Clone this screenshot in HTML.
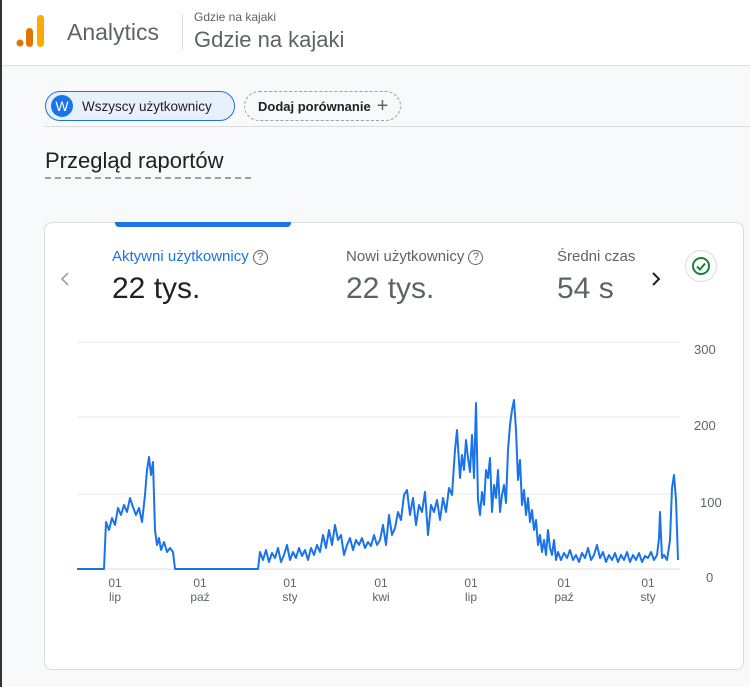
<!DOCTYPE html>
<html><head><meta charset="utf-8"><style>
*{box-sizing:border-box;margin:0;padding:0}
body{width:750px;height:687px;overflow:hidden;background:#f8f9fa;font-family:"Liberation Sans",Arial,sans-serif;position:relative}
.hdr{position:absolute;left:0;top:0;width:750px;height:66px;background:#fff;border-bottom:1px solid #dadce0}
.t{position:absolute;white-space:nowrap}
.chip{position:absolute;height:30px;border-radius:15px;font-size:14px;display:flex;align-items:center}
.card{position:absolute;left:44px;top:222px;width:700px;height:448px;background:#fff;border:1px solid #dadce0;border-radius:8px}
.q{display:inline-block;width:15px;height:15px;border:1.5px solid #5f6368;border-radius:50%;font-size:11px;text-align:center;line-height:13px;color:#5f6368;margin-left:4px;vertical-align:1px}
</style></head><body>
<div class="hdr">
  <svg style="position:absolute;left:16px;top:14px" width="32" height="34"><circle cx="4" cy="29" r="3.5" fill="#e37400"/><rect x="10" y="14" width="7" height="19" rx="3.5" fill="#e37400"/><rect x="21" y="1" width="7" height="32" rx="3.5" fill="#f9ab00"/></svg>
  <div class="t" style="left:67px;top:19px;font-size:23px;color:#5f6368">Analytics</div>
  <div style="position:absolute;left:182px;top:14px;width:1px;height:36px;background:#dadce0"></div>
  <div class="t" style="left:194px;top:10px;font-size:12px;color:#5f6368">Gdzie na kajaki</div>
  <div class="t" style="left:194px;top:27px;font-size:22px;color:#5f6368">Gdzie na kajaki</div>
</div>
<div style="position:absolute;left:0;top:0;width:2px;height:687px;background:#333"></div>
<div class="chip" style="left:45px;top:91px;width:190px;background:#e8f0fe;border:1px solid #1a73e8">
  <span style="width:22px;height:22px;border-radius:50%;background:#1a73e8;color:#fff;font-size:14px;display:flex;align-items:center;justify-content:center;margin-left:5px">W</span>
  <span style="margin-left:9px;color:#202124;font-size:13.5px">Wszyscy użytkownicy</span></div>
<div class="chip" style="left:244px;top:91px;width:157px;border:1px dashed #9aa0a6;font-weight:bold;color:#202124;font-size:13px">
  <span style="margin-left:13px">Dodaj porównanie</span><span style="margin-left:6px;font-weight:normal;font-size:20px;color:#5f6368">+</span></div>
<div style="position:absolute;left:44px;top:126px;width:706px;height:1px;background:#dadce0"></div>
<div class="t" style="left:45px;top:148px;font-size:22px;color:#202124">Przegląd raportów</div>
<div style="position:absolute;left:45px;top:177px;width:206px;border-top:2px dashed #9aa0a6"></div>
<div class="card">
  <div style="position:absolute;left:70px;top:-1px;width:176px;height:5px;background:#1a73e8;border-radius:0 0 4px 4px"></div>
  <svg style="position:absolute;left:14px;top:48px" width="12" height="16"><path d="M9 2L3 8l6 6" fill="none" stroke="#9aa0a6" stroke-width="1.6"/></svg>
  <div class="t" style="left:67px;top:25px;font-size:15px;color:#1a73e8">Aktywni użytkownicy<span class="q">?</span></div>
  <div class="t" style="left:67px;top:49px;font-size:30px;color:#202124">22 tys.</div>
  <div class="t" style="left:301px;top:25px;font-size:15px;color:#5f6368">Nowi użytkownicy<span class="q">?</span></div>
  <div class="t" style="left:301px;top:49px;font-size:30px;color:#5f6368">22 tys.</div>
  <div class="t" style="left:512px;top:25px;font-size:15px;color:#5f6368;width:79px;overflow:hidden">Średni czas</div>
  <div class="t" style="left:512px;top:49px;font-size:30px;color:#5f6368">54 s</div>
  <svg style="position:absolute;left:605px;top:48px" width="12" height="16"><path d="M3 2l6 6-6 6" fill="none" stroke="#202124" stroke-width="2"/></svg>
  <div style="position:absolute;left:640px;top:27px;width:32px;height:32px;border-radius:50%;border:1px solid #dadce0;display:flex;align-items:center;justify-content:center">
    <svg width="20" height="20"><circle cx="10" cy="10" r="8" fill="none" stroke="#188038" stroke-width="2"/><path d="M6 10.5l3 3 5-6" fill="none" stroke="#188038" stroke-width="2"/></svg></div>
</div>
<svg style="position:absolute;left:0;top:0" width="750" height="687">
  <g stroke="#e8eaed" stroke-width="1"><line x1="77" y1="342" x2="680" y2="342"/><line x1="77" y1="417" x2="680" y2="417"/><line x1="77" y1="494" x2="680" y2="494"/></g>
  <line x1="77" y1="569" x2="680" y2="569" stroke="#dadce0"/>
  <g font-size="13" fill="#5f6368" font-family="Liberation Sans,sans-serif">
  <text x="694" y="354">300</text><text x="694" y="430">200</text><text x="700" y="507">100</text><text x="706" y="582">0</text>
  <g text-anchor="middle" font-size="12"><text x="115" y="587">01</text><text x="115" y="601">lip</text><text x="200" y="587">01</text><text x="200" y="601">paź</text><text x="290" y="587">01</text><text x="290" y="601">sty</text><text x="381" y="587">01</text><text x="381" y="601">kwi</text><text x="471" y="587">01</text><text x="471" y="601">lip</text><text x="564" y="587">01</text><text x="564" y="601">paź</text><text x="648" y="587">01</text><text x="648" y="601">sty</text></g></g>
  <polyline fill="none" stroke="#1a73e8" stroke-width="2" stroke-linejoin="round" points="77,569 104,569 106,522 109,530 112,518 115,525 118,508 121,515 124,505 127,512 130,498 133,507 136,515 139,508 142,522 145,495 147,470 149,457 151,475 153,462 155,530 157,545 159,538 161,550 164,542 167,552 170,548 173,552 175,569 258,569 260,552 263,560 266,550 269,562 272,553 275,558 278,548 281,562 284,555 287,545 290,560 293,552 296,558 299,548 302,556 305,550 308,560 311,548 314,555 317,545 320,552 323,535 326,548 329,530 332,545 335,525 338,540 341,535 344,555 347,545 350,538 353,550 356,540 359,545 362,538 365,548 368,542 371,546 374,535 377,545 380,540 383,525 386,545 389,515 392,535 395,528 398,512 401,520 404,495 407,490 410,515 413,498 416,525 419,505 422,512 425,492 428,535 431,505 434,512 437,500 440,520 443,498 446,512 449,488 452,495 455,450 457,430 460,478 462,455 464,470 466,440 468,458 470,472 472,435 474,478 476,403 478,500 480,515 482,492 484,505 486,470 488,478 490,458 492,512 494,485 496,498 498,470 500,512 502,495 504,485 506,503 508,450 510,425 512,410 514,400 516,430 518,480 520,460 522,505 524,490 526,515 528,498 530,522 532,510 534,530 536,520 538,545 540,535 542,552 544,540 546,555 548,530 550,548 552,555 554,540 556,560 558,552 561,560 564,553 567,558 570,550 573,560 576,555 579,562 582,553 585,558 588,548 591,560 594,555 597,545 600,558 603,552 606,562 609,555 612,560 615,553 618,562 621,555 624,560 627,552 630,562 633,555 636,560 639,553 642,562 645,556 648,558 651,552 654,560 657,555 659,538 660,512 662,558 664,555 667,560 670,540 672,488 674,475 676,500 678,560"/>
</svg>
</body></html>
